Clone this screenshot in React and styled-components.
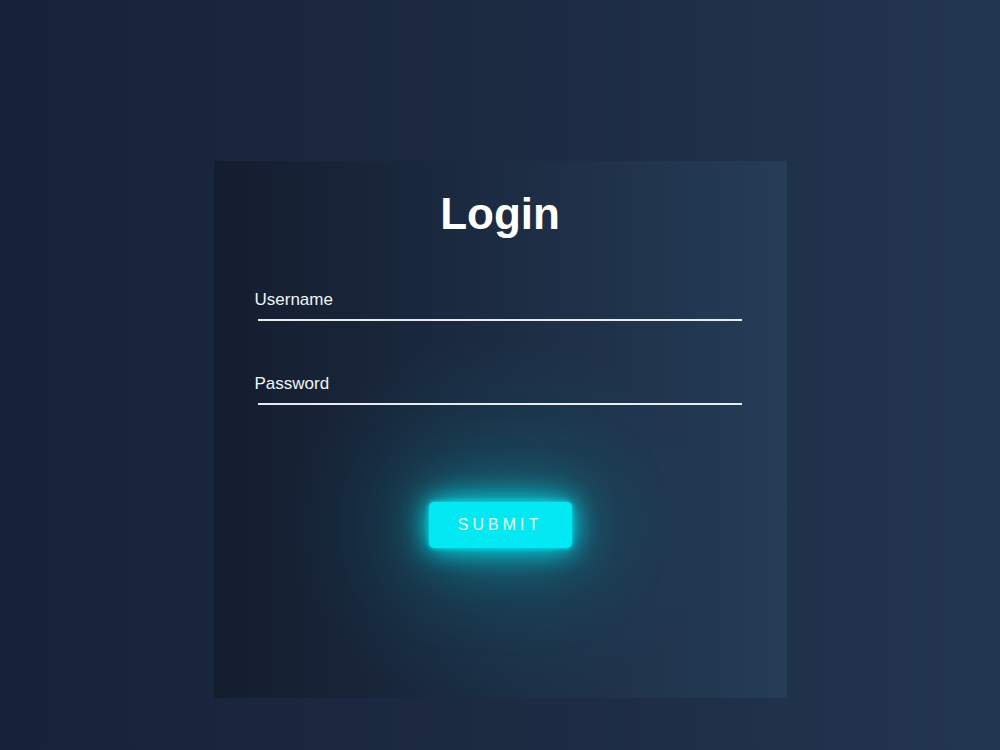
import styled, { createGlobalStyle } from "styled-components";

const GlobalStyle = createGlobalStyle`
  * {
    box-sizing: border-box;
  }

  body {
    margin: 0;
    font-family: "Liberation Sans", Arial, sans-serif;
  }
`;

function Field({ label, type }) {
  return (
    <FieldBox>
      <Input type={type} required />
      <Label>{label}</Label>
    </FieldBox>
  );
}

export default function App() {
  return (
    <Page>
      <GlobalStyle />
      <Card>
        <Title>Login</Title>
        <Form onSubmit={(e) => e.preventDefault()}>
          <Field label="Username" type="text" />
          <Field label="Password" type="password" />
          <Submit type="submit">Submit</Submit>
        </Form>
      </Card>
    </Page>
  );
}

const Page = styled.div`
  width: 100%;
  height: 750px;
  padding-top: 161px;
  display: flex;
  justify-content: center;
  align-items: flex-start;
  background: linear-gradient(to right, #17223a 0%, #1c2a42 50%, #233650 100%);
`;

const Card = styled.div`
  width: 573px;
  height: 537px;
  padding: 32px 41px 0;
  display: flex;
  flex-direction: column;
  background:
    radial-gradient(ellipse 210px 190px at 50% 68%, rgba(20, 110, 130, 0.32), rgba(20, 110, 130, 0) 100%),
    linear-gradient(to right, #141d2e 0%, #1b2a40 45%, #253d57 100%);
`;

const Title = styled.h2`
  margin: 0;
  color: #fff;
  font-size: 44px;
  font-weight: 700;
  text-align: center;
  line-height: 42px;
`;

const Form = styled.form`
  display: flex;
  flex-direction: column;
  padding-top: 48px;
`;

const FieldBox = styled.div`
  position: relative;
  height: 84px;
`;

const Input = styled.input`
  width: 484px;
  margin-left: 3px;
  height: 38px;
  padding: 0;
  background: transparent;
  border: none;
  border-bottom: 2px solid #e8ecf0;
  outline: none;
  color: #fff;
  font-family: inherit;
  font-size: 17px;
`;

const Label = styled.label`
  position: absolute;
  left: 0;
  top: 7px;
  color: #f2f4f7;
  font-size: 17px;
  pointer-events: none;
`;

const Submit = styled.button`
  align-self: center;
  width: 143px;
  height: 46px;
  margin-top: 51px;
  border: none;
  border-radius: 5px;
  background: #03e9f4;
  color: #e6fbfd;
  font-family: inherit;
  font-size: 16px;
  letter-spacing: 4px;
  text-transform: uppercase;
  padding-left: 6px;
  cursor: pointer;
  box-shadow:
    0 0 5px #03e9f4,
    0 0 25px #03e9f4,
    0 0 50px rgba(3, 233, 244, 0.6),
    0 0 100px rgba(3, 233, 244, 0.35);
`;
